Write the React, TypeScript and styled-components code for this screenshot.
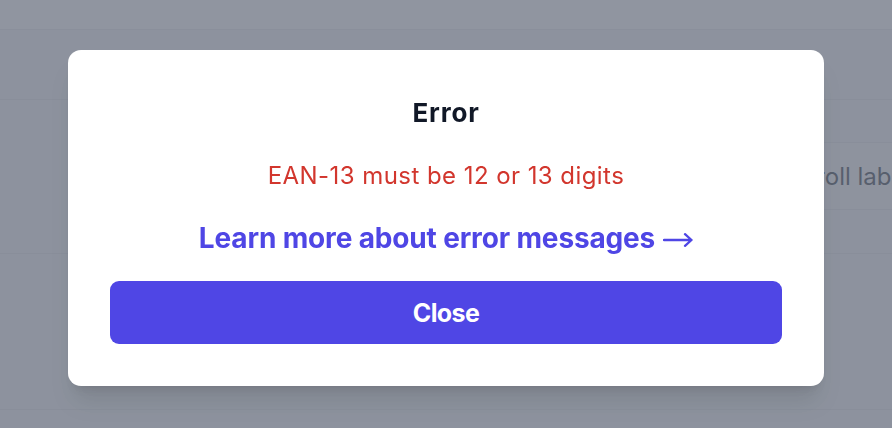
import React from 'react';
import styled, { createGlobalStyle } from 'styled-components';

const GlobalStyle = createGlobalStyle`
    html, body {
        margin: 0;
        padding: 0;
        height: 100%;
        overflow: hidden;
    }
    body {
        font-family: Inter, "Noto Sans", "Liberation Sans", sans-serif;
        background: #f3f4f6;
        -webkit-font-smoothing: antialiased;
    }
`;

const ArrowIcon = () => (
    <ArrowSvg viewBox="0 0 30 14" aria-hidden="true">
        <path d="M1 7H28.5M22 1.2L28.5 7L22 12.8" />
    </ArrowSvg>
);

export default function App() {
    return (
        <>
            <GlobalStyle />
            <Page>
                <TopBar />
                <Section />
                <Row>
                    <LabelInput value="Scroll labels" readOnly />
                </Row>
                <Row $height={155} />
            </Page>
            <Overlay>
                <Dialog role="dialog" aria-labelledby="error-title">
                    <Title id="error-title">Error</Title>
                    <Message>EAN-13 must be 12 or 13 digits</Message>
                    <HelpLink href="#">
                        Learn more about error messages
                        <ArrowIcon />
                    </HelpLink>
                    <CloseButton type="button">Close</CloseButton>
                </Dialog>
            </Overlay>
        </>
    );
}

const Page = styled.div`
    height: 100vh;
    overflow: hidden;
    background: #f3f4f6;
`;

const TopBar = styled.div`
    height: 29px;
    background: #fff;
    border-bottom: 1px solid #e5e7eb;
`;

const Section = styled.div`
    height: 69px;
    border-bottom: 1px solid #e2e4e8;
`;

const Row = styled.div<{ $height?: number }>`
    height: ${(p) => (p.$height ? `${p.$height}px` : 'auto')};
    padding: ${(p) => (p.$height ? '0' : '42px 0 43px')};
    border-bottom: 1px solid #e2e4e8;
    display: flex;
    justify-content: flex-end;
    overflow: hidden;
`;

const LabelInput = styled.input`
    flex: none;
    width: 320px;
    height: 68px;
    box-sizing: border-box;
    margin-right: -188px;
    padding: 0 16px;
    border: 1px solid #e2e4e8;
    border-radius: 8px;
    background: #f5f6f8;
    font-family: Inter, sans-serif;
    font-size: 24px;
    color: #1f2937;
    text-indent: 10px;
`;

const Overlay = styled.div`
    position: fixed;
    inset: 0;
    background: rgba(107, 114, 128, 0.75);
    display: flex;
    justify-content: center;
    align-items: center;
    padding-top: 8px;
    box-sizing: border-box;
`;

const Dialog = styled.div`
    width: 756px;
    box-sizing: border-box;
    padding: 45px 42px 42px;
    background: #fff;
    border-radius: 13px;
    box-shadow: 0 20px 25px -5px rgba(0, 0, 0, 0.1), 0 8px 10px -6px rgba(0, 0, 0, 0.1);
    display: flex;
    flex-direction: column;
    align-items: center;
    text-align: center;
`;

const Title = styled.h2`
    margin: 0;
    font-size: 26px;
    line-height: 35px;
    font-weight: 700;
    letter-spacing: 0.8px;
    color: #111827;
`;

const Message = styled.p`
    margin: 29px 0 0;
    font-size: 24px;
    line-height: 34px;
    letter-spacing: 0.44px;
    color: #d2362d;
`;

const HelpLink = styled.a`
    margin-top: 25px;
    display: inline-flex;
    align-items: center;
    gap: 8px;
    font-size: 28px;
    line-height: 40px;
    font-weight: 700;
    letter-spacing: -0.15px;
    color: #4f46e5;
    text-decoration: none;
`;

const ArrowSvg = styled.svg`
    width: 30px;
    height: 14px;
    margin-top: 3px;
    fill: none;
    stroke: currentColor;
    stroke-width: 2.3;
    stroke-linecap: round;
    stroke-linejoin: round;
`;

const CloseButton = styled.button`
    margin-top: 23px;
    width: 100%;
    height: 63px;
    border: none;
    border-radius: 9px;
    background: #4f46e5;
    color: #fff;
    font-family: Inter, sans-serif;
    font-size: 25px;
    font-weight: 700;
    letter-spacing: -0.6px;
    cursor: pointer;
`;
